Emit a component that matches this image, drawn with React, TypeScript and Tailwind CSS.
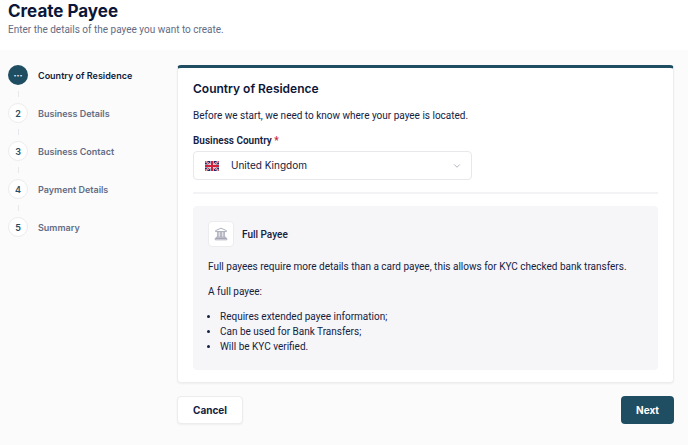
import { useState } from 'react';
import { ChevronDown } from 'lucide-react';

type Step = {
  marker: string;
  label: string;
};

const steps: Step[] = [
  { marker: '···', label: 'Country of Residence' },
  { marker: '2', label: 'Business Details' },
  { marker: '3', label: 'Business Contact' },
  { marker: '4', label: 'Payment Details' },
  { marker: '5', label: 'Summary' },
];

const requirements = [
  'Requires extended payee information;',
  'Can be used for Bank Transfers;',
  'Will be KYC verified.',
];

function UnionJack({ className }: { className?: string }) {
  return (
    <svg viewBox="0 0 14 10" className={className} aria-hidden="true">
      <rect width="14" height="10" fill="#1f2a6b" />
      <path d="M0 0l14 10M14 0L0 10" stroke="#fff" strokeWidth="1.8" />
      <path d="M0 0l14 10M14 0L0 10" stroke="#d0203a" strokeWidth="0.9" />
      <path d="M7 0v10M0 5h14" stroke="#fff" strokeWidth="3.2" />
      <path d="M7 0v10M0 5h14" stroke="#d0203a" strokeWidth="2" />
    </svg>
  );
}

function BankIcon({ className }: { className?: string }) {
  return (
    <svg
      viewBox="0 0 14 14"
      className={className}
      fill="none"
      stroke="currentColor"
      strokeWidth="0.8"
      strokeLinejoin="round"
      aria-hidden="true"
    >
      <path d="M7 1.2L12.4 3.6v1H1.6v-1z" />
      <path d="M3.6 4.6v5.6M4.8 4.6v5.6M6.4 4.6v5.6M7.6 4.6v5.6M9.2 4.6v5.6M10.4 4.6v5.6" />
      <path d="M2.2 10.2h9.6v1.2H2.2zM1.2 11.4h11.6v1.4H1.2z" />
    </svg>
  );
}

function Stepper({ current }: { current: number }) {
  return (
    <ol className="w-[169px] shrink-0 font-['Inter',sans-serif]">
      {steps.map((step, index) => {
        const active = index === current;
        return (
          <li key={step.label} aria-current={active ? 'step' : undefined}>
            {index > 0 && (
              <div className="flex h-[18px] w-5 items-center justify-center">
                <span className="h-1.5 w-px bg-[#e8e8ec]" />
              </div>
            )}
            <div className="flex items-center gap-2.5">
              <span
                className={
                  active
                    ? 'flex size-5 items-center justify-center rounded-full bg-[#1f4e63] text-[9px] font-bold text-white'
                    : 'flex size-5 items-center justify-center rounded-full border border-[#ececef] bg-white text-[9px] font-semibold text-[#1f4e63]'
                }
              >
                {step.marker}
              </span>
              <span
                className={
                  active
                    ? 'text-[9px] font-semibold text-[#0f1b3d]'
                    : 'text-[9px] font-semibold text-[#636c84]'
                }
              >
                {step.label}
              </span>
            </div>
          </li>
        );
      })}
    </ol>
  );
}

export default function App() {
  const [country, setCountry] = useState('GB');

  return (
    <div className="min-h-screen bg-[#fbfbfb] font-['Roboto',sans-serif] text-[10px] leading-[15px] text-[#14213f]">
      <header className="bg-white px-2 pb-3">
        <h1 className="font-['Inter',sans-serif] text-[17px] leading-[22px] font-bold text-[#0b1638]">
          Create Payee
        </h1>
        <p className="leading-[16px] text-[#636c84]">
          Enter the details of the payee you want to create.
        </p>
      </header>

      <main className="flex pt-[15px] pr-3.5 pl-2">
        <Stepper current={0} />

        <form className="min-w-0 flex-1" onSubmit={(e) => e.preventDefault()}>
          <section className="rounded border border-t-[3px] border-[#ededf0] border-t-[#1f4e63] bg-white px-[15px] pt-3 pb-3 shadow-xs">
            <h2 className="font-['Inter',sans-serif] text-[12px] leading-[18px] font-semibold text-[#0b1638]">
              Country of Residence
            </h2>
            <p className="mt-2.5">Before we start, we need to know where your payee is located.</p>

            <label htmlFor="country" className="mt-2.5 block font-semibold">
              Business Country <span className="text-[#c62840]">*</span>
            </label>
            <div className="relative mt-[3px] w-3/5">
              <UnionJack className="pointer-events-none absolute top-1/2 left-3 h-2.5 w-3.5 -translate-y-1/2" />
              <select
                id="country"
                value={country}
                onChange={(e) => setCountry(e.target.value)}
                className="block h-[29px] w-full appearance-none rounded border border-[#e8e8ec] bg-white pr-8 pl-[37px] font-['Inter',sans-serif]"
              >
                <option value="GB">United Kingdom</option>
              </select>
              <ChevronDown
                className="pointer-events-none absolute top-1/2 right-2.5 size-2.5 -translate-y-1/2 text-[#a3a7b4]"
                aria-hidden="true"
              />
            </div>

            <hr className="mt-3 border-t-2 border-[#f3f3f5]" />

            <div className="mt-3 rounded bg-[#f6f6f9] px-[15px] pt-[15px] pb-4">
              <div className="flex items-center gap-2">
                <span className="flex size-[26px] items-center justify-center rounded border border-[#ececef] bg-white">
                  <BankIcon className="size-3.5 text-[#9a9dad]" />
                </span>
                <h3 className="font-medium">Full Payee</h3>
              </div>
              <p className="mt-3">
                Full payees require more details than a card payee, this allows for KYC checked bank
                transfers.
              </p>
              <p className="mt-2.5">A full payee:</p>
              <ul className="mt-2.5 list-disc pl-3">
                {requirements.map((item) => (
                  <li key={item}>{item}</li>
                ))}
              </ul>
            </div>
          </section>

          <div className="mt-[13px] flex items-center justify-between pb-4 font-['Inter',sans-serif]">
            <button
              type="button"
              className="h-7 rounded border border-[#ececef] bg-white px-[15px] font-bold shadow-xs"
            >
              Cancel
            </button>
            <button type="submit" className="h-7 rounded bg-[#1f4e63] px-[15px] font-bold text-white">
              Next
            </button>
          </div>
        </form>
      </main>
    </div>
  );
}
